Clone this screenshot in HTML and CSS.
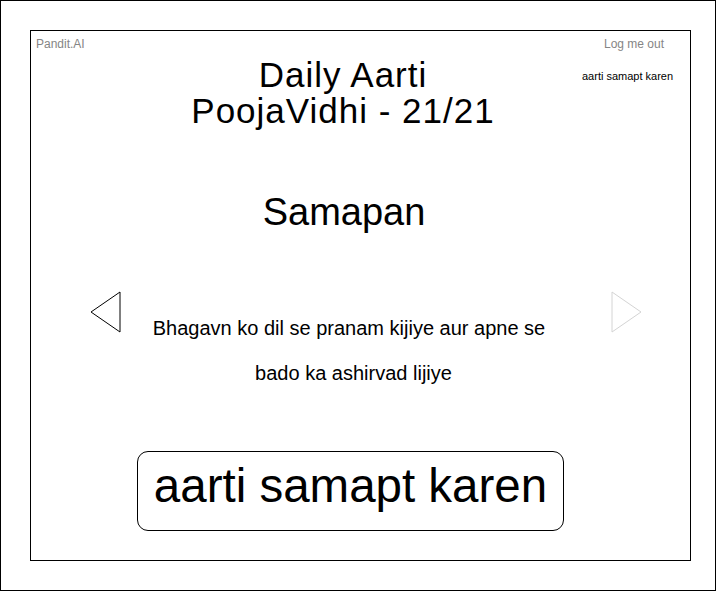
FILE: index.html
```html
<!DOCTYPE html>
<html lang="en">
<head>
<meta charset="utf-8">
<title>Pandit.AI - Daily Aarti</title>
<link rel="stylesheet" href="styles.css">
</head>
<body>
<div class="page">
  <div class="frame">
    <div class="top">
      <div class="brand">Pandit.AI</div>
      <div class="title">
        <div class="title-line">Daily Aarti</div>
        <div class="title-line">PoojaVidhi - 21/21</div>
      </div>
      <div class="side">
        <div class="logout">Log me out</div>
        <div class="side-link">aarti samapt karen</div>
      </div>
    </div>
    <div class="step">Samapan</div>
    <div class="middle">
      <svg class="arrow arrow-left" width="32" height="42" viewBox="0 0 32 42">
        <polygon points="1,21 30,1 30,41" fill="#fff" stroke="#000" stroke-width="1"/>
      </svg>
      <div class="text">
        <div class="line line-1">Bhagavn ko dil se pranam kijiye aur apne se</div>
        <div class="line line-2">bado ka ashirvad lijiye</div>
      </div>
      <svg class="arrow arrow-right" width="32" height="42" viewBox="0 0 32 42">
        <polygon points="1,1 30,21 1,41" fill="#fff" stroke="#d4d4d4" stroke-width="1"/>
      </svg>
    </div>
    <div class="finish">aarti samapt karen</div>
  </div>
</div>
</body>
</html>
```
FILE: styles.css
```css
html, body {
  margin: 0;
  padding: 0;
  background: #fff;
}

body {
  font-family: "Liberation Sans", Arial, Helvetica, sans-serif;
  color: #000;
}

.page {
  width: 716px;
  height: 591px;
  box-sizing: border-box;
  border: 1px solid #000;
  padding: 29px 24px 0 29px;
}

.frame {
  width: 661px;
  height: 531px;
  box-sizing: border-box;
  border: 1px solid #000;
  display: flex;
  flex-direction: column;
}

.top {
  display: grid;
  grid-template-columns: 119px 386px 1fr;
  padding-top: 6px;
}

.brand {
  font-size: 12px;
  line-height: 14px;
  color: #858585;
  padding-left: 5px;
}

.title {
  margin-top: 20px;
  text-align: center;
  font-size: 35px;
  line-height: 36px;
  letter-spacing: 1px;
}

.side {
  display: flex;
  flex-direction: column;
  align-items: flex-start;
}

.logout {
  font-size: 12px;
  line-height: 14px;
  color: #858585;
  margin-left: 68px;
}

.side-link {
  font-size: 11px;
  line-height: 13px;
  margin-top: 19px;
  margin-left: 46px;
}

.step {
  margin-top: 61px;
  font-size: 38px;
  line-height: 44px;
  text-align: center;
  padding-right: 33px;
}

.middle {
  margin-top: 57px;
  display: flex;
  align-items: flex-start;
  padding-left: 59px;
}

.arrow {
  display: block;
  flex: none;
}

.text {
  width: 489px;
  margin-top: 15px;
  font-size: 20px;
  line-height: 45px;
  text-align: center;
  white-space: nowrap;
}

.line-1 {
  padding-right: 35px;
}

.line-2 {
  padding-right: 26px;
}

.finish {
  align-self: flex-start;
  margin-top: 55px;
  margin-left: 106px;
  width: 427px;
  height: 80px;
  box-sizing: border-box;
  border: 1px solid #000;
  border-radius: 11px;
  padding-bottom: 10px;
  font-size: 47.5px;
  line-height: 68px;
  text-align: center;
}
```
